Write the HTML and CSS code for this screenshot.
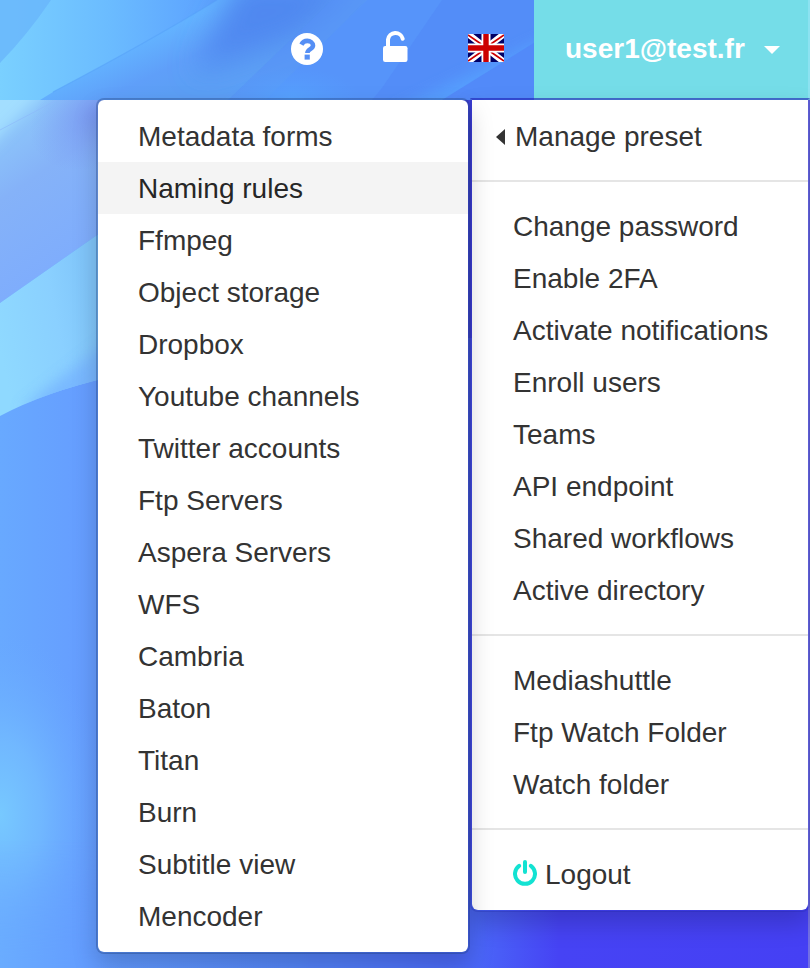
FILE: index.html
```
<!DOCTYPE html>
<html lang="en">
<head>
<meta charset="utf-8">
<title>User menu</title>
<link rel="stylesheet" href="styles.css">
</head>
<body>
<svg class="wallpaper" viewBox="0 0 810 968" preserveAspectRatio="none" aria-hidden="true">
  <defs>
    <linearGradient id="base" x1="0" y1="0" x2="1" y2="0"><stop offset="0" stop-color="#68a9ff"/><stop offset=".12" stop-color="#659cff"/><stop offset=".4" stop-color="#517df2"/><stop offset=".65" stop-color="#4746ed"/><stop offset="1" stop-color="#4540f4"/></linearGradient>
    <linearGradient id="top" gradientUnits="userSpaceOnUse" x1="0" y1="0" x2="540" y2="0"><stop offset="0" stop-color="#7ad0ff"/><stop offset=".2" stop-color="#6bbcff"/><stop offset=".34" stop-color="#60a9ff"/><stop offset=".5" stop-color="#5595f8"/><stop offset="1" stop-color="#528bfa"/></linearGradient>
    <linearGradient id="fold" gradientUnits="userSpaceOnUse" x1="130" y1="48" x2="155" y2="100"><stop offset="0" stop-color="#63b2ff"/><stop offset=".6" stop-color="#5f9ff9"/><stop offset="1" stop-color="#5c9ff5"/></linearGradient>
    <linearGradient id="upper" gradientUnits="userSpaceOnUse" x1="0" y1="130" x2="110" y2="290"><stop offset="0" stop-color="#8dc6fa"/><stop offset=".3" stop-color="#85b2f8"/><stop offset="1" stop-color="#7baaff"/></linearGradient>
    <linearGradient id="band" gradientUnits="userSpaceOnUse" x1="0" y1="350" x2="100" y2="330"><stop offset="0" stop-color="#8fd9ff"/><stop offset=".6" stop-color="#8ad0ff"/><stop offset="1" stop-color="#80c5fa"/></linearGradient>
    <radialGradient id="glow"><stop offset="0" stop-color="#77c9ff"/><stop offset=".4" stop-color="#73bcff" stop-opacity=".8"/><stop offset="1" stop-color="#69a8ff" stop-opacity="0"/></radialGradient>
    <radialGradient id="violet"><stop offset="0" stop-color="#7590ef" stop-opacity=".85"/><stop offset="1" stop-color="#7b9bf4" stop-opacity="0"/></radialGradient>
    <radialGradient id="cyan"><stop offset="0" stop-color="#56a5ff" stop-opacity=".85"/><stop offset="1" stop-color="#559eff" stop-opacity="0"/></radialGradient>
    <linearGradient id="bottom" gradientUnits="userSpaceOnUse" x1="0" y1="0" x2="810" y2="0"><stop offset="0" stop-color="#6aacff"/><stop offset=".12" stop-color="#629bff"/><stop offset=".36" stop-color="#5485f8"/><stop offset=".59" stop-color="#4a66f8"/><stop offset=".69" stop-color="#4643f4"/><stop offset="1" stop-color="#4540f4"/></linearGradient>
    <linearGradient id="fade" x1="0" y1="0" x2="0" y2="1"><stop offset="0" stop-color="#fff" stop-opacity="0"/><stop offset="1" stop-color="#fff"/></linearGradient>
    <mask id="lower"><path fill="url(#fade)" d="M0 840h810v128H0z"/></mask>
    <filter id="soft" filterUnits="userSpaceOnUse" x="-100" y="-100" width="1000" height="700"><feGaussianBlur stdDeviation="7"/></filter>
    <filter id="wide" filterUnits="userSpaceOnUse" x="-100" y="-100" width="1000" height="700"><feGaussianBlur stdDeviation="14"/></filter>
    <clipPath id="head"><path d="M0 0h810v100H0z"/></clipPath>
    <clipPath id="veil"><path d="M0 100h110v126L0 303z"/></clipPath>
    <clipPath id="ribbon"><path d="M0 303 110 226V377Q45 392 0 416z"/></clipPath>
  </defs>
  <path fill="url(#base)" d="M0 0h810v968H0z"/>
  <ellipse cx="0" cy="815" rx="105" ry="185" fill="url(#glow)"/>
  <g clip-path="url(#veil)">
    <path fill="url(#upper)" d="M0 100h110v210H0z"/>
    <path fill="#a3deff" filter="url(#soft)" d="M-20 80H55Q20 115-20 155z"/>
    <ellipse cx="100" cy="113" rx="75" ry="52" transform="rotate(-28 100 113)" fill="url(#violet)"/>
    <path stroke="#8cb8fa" opacity=".6" d="M0 130 57 100"/>
  </g>
  <g clip-path="url(#ribbon)">
    <path fill="url(#band)" d="M0 220h110v200H0z"/>
    <path fill="#74b2ff" opacity=".8" filter="url(#soft)" d="M20 410 115 335V400z"/>
  </g>
  <path fill="url(#bottom)" mask="url(#lower)" d="M0 840h100v128H0z"/>
  <path fill="url(#bottom)" mask="url(#lower)" d="M100 840h710v128H100z"/>
  <path fill="url(#bottom)" d="M470 900h340v68H470z"/>
  <path fill="#4242df" d="M466 98h8v240h-8z"/>
  <path fill="#726fe4" d="M808 100h2v868h-2z"/>
  <g clip-path="url(#head)">
    <path fill="url(#top)" d="M0 0h540v100H0z"/>
    <path fill="#68b4fb" opacity=".75" d="M51 0H0V63Q28 34 51 0z"/>
    <path fill="url(#fold)" d="M217 0Q150 41 53 92L40 100H540V0z"/>
    <path stroke="#56a2f8" stroke-width="1.2" opacity=".6" d="M217 0Q150 41 53 92" fill="none"/>
    <path fill="#4f88f0" filter="url(#wide)" d="M240-20H360L300 35 195 72z"/>
    <path fill="#568ff7" opacity=".5" d="M332 0 228 100H265L367 0z"/>
    <path fill="#5694fa" d="M367 0 265 100H540V0z"/>
    <ellipse cx="292" cy="100" rx="70" ry="34" fill="url(#cyan)"/>
    <path fill="#528bf8" opacity=".8" d="M442 0 382 88 372 100H540V0z"/>
    <path fill="#56a2ff" opacity=".8" filter="url(#soft)" d="M390 112 545 38V62L460 110z"/>
    <path fill="#528af9" d="M442 100 540 39v61z"/>
  </g>
</svg>

<header class="topbar">
  <a class="tool help" aria-label="Help"><svg viewBox="0 0 32 32"><circle cx="16" cy="16" r="16" fill="#fff"/><path d="M10.4 11.6C11.8 9 13.6 7.9 16.2 7.9C19.4 7.9 22 9.9 22 12.6C22 16.3 16.4 16 16.4 20" fill="none" stroke="#558ff5" stroke-width="4.6"/><path d="M13.6 21.6h5.2v5h-5.2z" fill="#558ff5"/></svg></a>
  <a class="tool lock" aria-label="Lock"><svg viewBox="0 0 26 32"><rect x="1" y="16" width="24.5" height="16" rx="2.2" fill="#fff"/><path d="M6 18V9.5A7.5 7.5 0 0 1 20.7 8.7" fill="none" stroke="#fff" stroke-width="4" stroke-linecap="round"/></svg></a>
  <a class="tool flag" aria-label="English"><svg viewBox="0 0 36 28"><path fill="#006" d="M0 0h36v28H0z"/><path d="m0 0 36 28M36 0 0 28" stroke="#fff" stroke-width="6.4"/><path d="M0 1 13.5 10.3M36 27 22.5 17.7M36 1 22.5 10.3M0 27 13.5 17.7" stroke="#c00" stroke-width="1.7"/><path d="M18 0v28M0 14h36" stroke="#fff" stroke-width="9"/><path d="M18 0v28M0 14h36" stroke="#c00" stroke-width="5.4"/></svg></a>
  <a class="account">user1@test.fr<span class="caret"></span></a>
</header>

<nav class="menu account-menu">
  <a class="item parent"><span class="back"></span>Manage preset</a>
  <hr>
  <a class="item">Change password</a>
  <a class="item">Enable 2FA</a>
  <a class="item">Activate notifications</a>
  <a class="item">Enroll users</a>
  <a class="item">Teams</a>
  <a class="item">API endpoint</a>
  <a class="item">Shared workflows</a>
  <a class="item">Active directory</a>
  <hr>
  <a class="item">Mediashuttle</a>
  <a class="item">Ftp Watch Folder</a>
  <a class="item">Watch folder</a>
  <hr>
  <a class="item logout"><svg viewBox="0 0 24 26"><path d="M6.1 5.8A10 10 0 1 0 17.9 5.8M12 2V12" fill="none" stroke="#13e2d2" stroke-width="4" stroke-linecap="round"/></svg>Logout</a>
</nav>

<nav class="menu preset-menu">
  <a class="item">Metadata forms</a>
  <a class="item active">Naming rules</a>
  <a class="item">Ffmpeg</a>
  <a class="item">Object storage</a>
  <a class="item">Dropbox</a>
  <a class="item">Youtube channels</a>
  <a class="item">Twitter accounts</a>
  <a class="item">Ftp Servers</a>
  <a class="item">Aspera Servers</a>
  <a class="item">WFS</a>
  <a class="item">Cambria</a>
  <a class="item">Baton</a>
  <a class="item">Titan</a>
  <a class="item">Burn</a>
  <a class="item">Subtitle view</a>
  <a class="item">Mencoder</a>
</nav>
</body>
</html>
```
FILE: styles.css
```
* { box-sizing: border-box; }

body {
  position: relative;
  height: 968px;
  margin: 0;
  overflow: hidden;
  font: 28px/40px "Liberation Sans", Arial, sans-serif;
  color: #333;
}

svg { display: block; }

.wallpaper {
  position: absolute;
  inset: 0;
  width: 810px;
  height: 968px;
}

.topbar {
  position: relative;
  display: flex;
  justify-content: flex-end;
  height: 100px;
  padding-right: 2px;
}

.topbar::after {
  content: "";
  position: absolute;
  right: 0;
  top: 0;
  width: 2px;
  height: 100px;
  background: #8ce2f1;
}

.tool { flex: none; }
.help { width: 32px; margin: 33px 59px 0 0; }
.lock { width: 26px; margin: 30px 60px 0 0; }
.flag { width: 36px; margin: 34px 30px 0 0; }

.account {
  display: flex;
  align-items: center;
  width: 274px;
  height: 100px;
  padding: 0 0 2px 31px;
  background: #75dde8;
  color: #fff;
  font-weight: bold;
}

.caret {
  margin: 1px 0 0 19px;
  border: 8px solid transparent;
  border-top-color: #fff;
  border-bottom: 0;
}

.menu {
  position: absolute;
  top: 98px;
  padding: 10px 0;
  border: 2px solid rgba(0, 0, 0, .15);
  border-radius: 8px;
  background: #fff;
  background-clip: padding-box;
  box-shadow: 0 12px 24px rgba(0, 0, 0, .175);
}

.account-menu {
  left: 470px;
  width: 340px;
  border-color: rgba(30, 40, 160, .25);
  border-top-color: rgba(30, 30, 180, .6);
  border-top-left-radius: 0;
  border-top-right-radius: 0;
}

.preset-menu {
  left: 96px;
  width: 374px;
  border-color: rgba(30, 60, 120, .35);
}

.item {
  display: block;
  height: 52px;
  padding: 7px 0 5px 41px;
  white-space: nowrap;
}

.preset-menu .item { padding-left: 40px; }
.active { background: #f4f4f4; color: #262626; }

.account-menu .parent {
  display: flex;
  align-items: center;
  padding-left: 24px;
}

.back {
  margin: -1px 10px 0 0;
  border: 8px solid transparent;
  border-right: 9px solid #333;
  border-left: 0;
}

.menu hr {
  height: 2px;
  margin: 18px 0;
  border: 0;
  background: #e5e5e5;
}

.logout {
  display: flex;
  align-items: center;
}

.logout svg {
  width: 24px;
  height: 26px;
  margin: -4px 8px 0 0;
}
```
